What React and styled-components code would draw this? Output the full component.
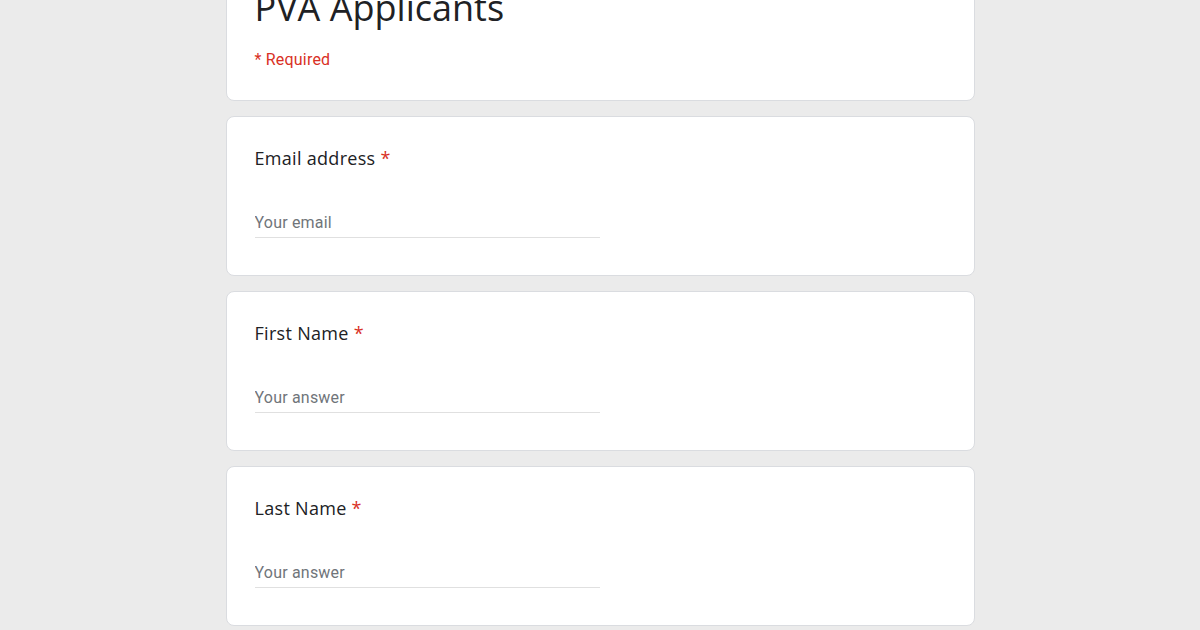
import React from "react";
import styled, { createGlobalStyle } from "styled-components";

const GlobalStyle = createGlobalStyle`
  html, body {
    margin: 0;
    padding: 0;
    background-color: #ebebeb;
  }
  body {
    font-family: Roboto, "Liberation Sans", sans-serif;
  }
`;

// 페이지 전체 (제목 카드 윗부분은 화면 밖으로)
const Page = styled.div`
  display: flex;
  flex-direction: column;
  align-items: center;
  gap: 15px;
  margin-top: -30px;
  padding-bottom: 24px;
`;

// 카드
const Card = styled.div`
  box-sizing: border-box;
  width: 749px;
  background-color: #ffffff;
  border: 1px solid #dadce0;
  border-radius: 8px;
  padding: ${(p) => (p.$header ? "17px 28px 30px" : "29px 28px 37px")};
`;

const Title = styled.h1`
  margin: 0 0 22px;
  font-family: "Open Sans", Roboto, sans-serif;
  font-size: 36px;
  font-weight: 400;
  line-height: 40px;
  color: #202124;
`;

const RequiredNote = styled.div`
  font-size: 16px;
  line-height: 20px;
  color: #d93025;
  letter-spacing: 0.2px;
`;

const Label = styled.div`
  font-family: "Open Sans", Roboto, sans-serif;
  font-size: 18px;
  line-height: 24px;
  letter-spacing: 0.3px;
  color: #202124;
  margin-bottom: 37px;
`;

const Star = styled.span`
  color: #d93025;
`;

const Input = styled.input`
  display: block;
  box-sizing: border-box;
  width: 345px;
  height: 31px;
  padding: 0;
  border: none;
  border-bottom: 1px solid #e0e0e0;
  outline: none;
  background: transparent;
  font-family: Roboto, "Liberation Sans", sans-serif;
  font-size: 16px;
  color: #202124;
  letter-spacing: 0.2px;

  &::placeholder {
    color: #70757a;
  }
`;

const questions = [
  { label: "Email address", placeholder: "Your email", type: "email" },
  { label: "First Name", placeholder: "Your answer", type: "text" },
  { label: "Last Name", placeholder: "Your answer", type: "text" },
];

const App = () => {
  return (
    <>
      <GlobalStyle />
      <Page>
        {/* 제목 카드 */}
        <Card $header>
          <Title>PVA Applicants</Title>
          <RequiredNote>* Required</RequiredNote>
        </Card>

        {/* 질문 카드 */}
        {questions.map((q) => (
          <Card key={q.label}>
            <Label>
              {q.label} <Star>*</Star>
            </Label>
            <Input type={q.type} placeholder={q.placeholder} />
          </Card>
        ))}
      </Page>
    </>
  );
};

export default App;
